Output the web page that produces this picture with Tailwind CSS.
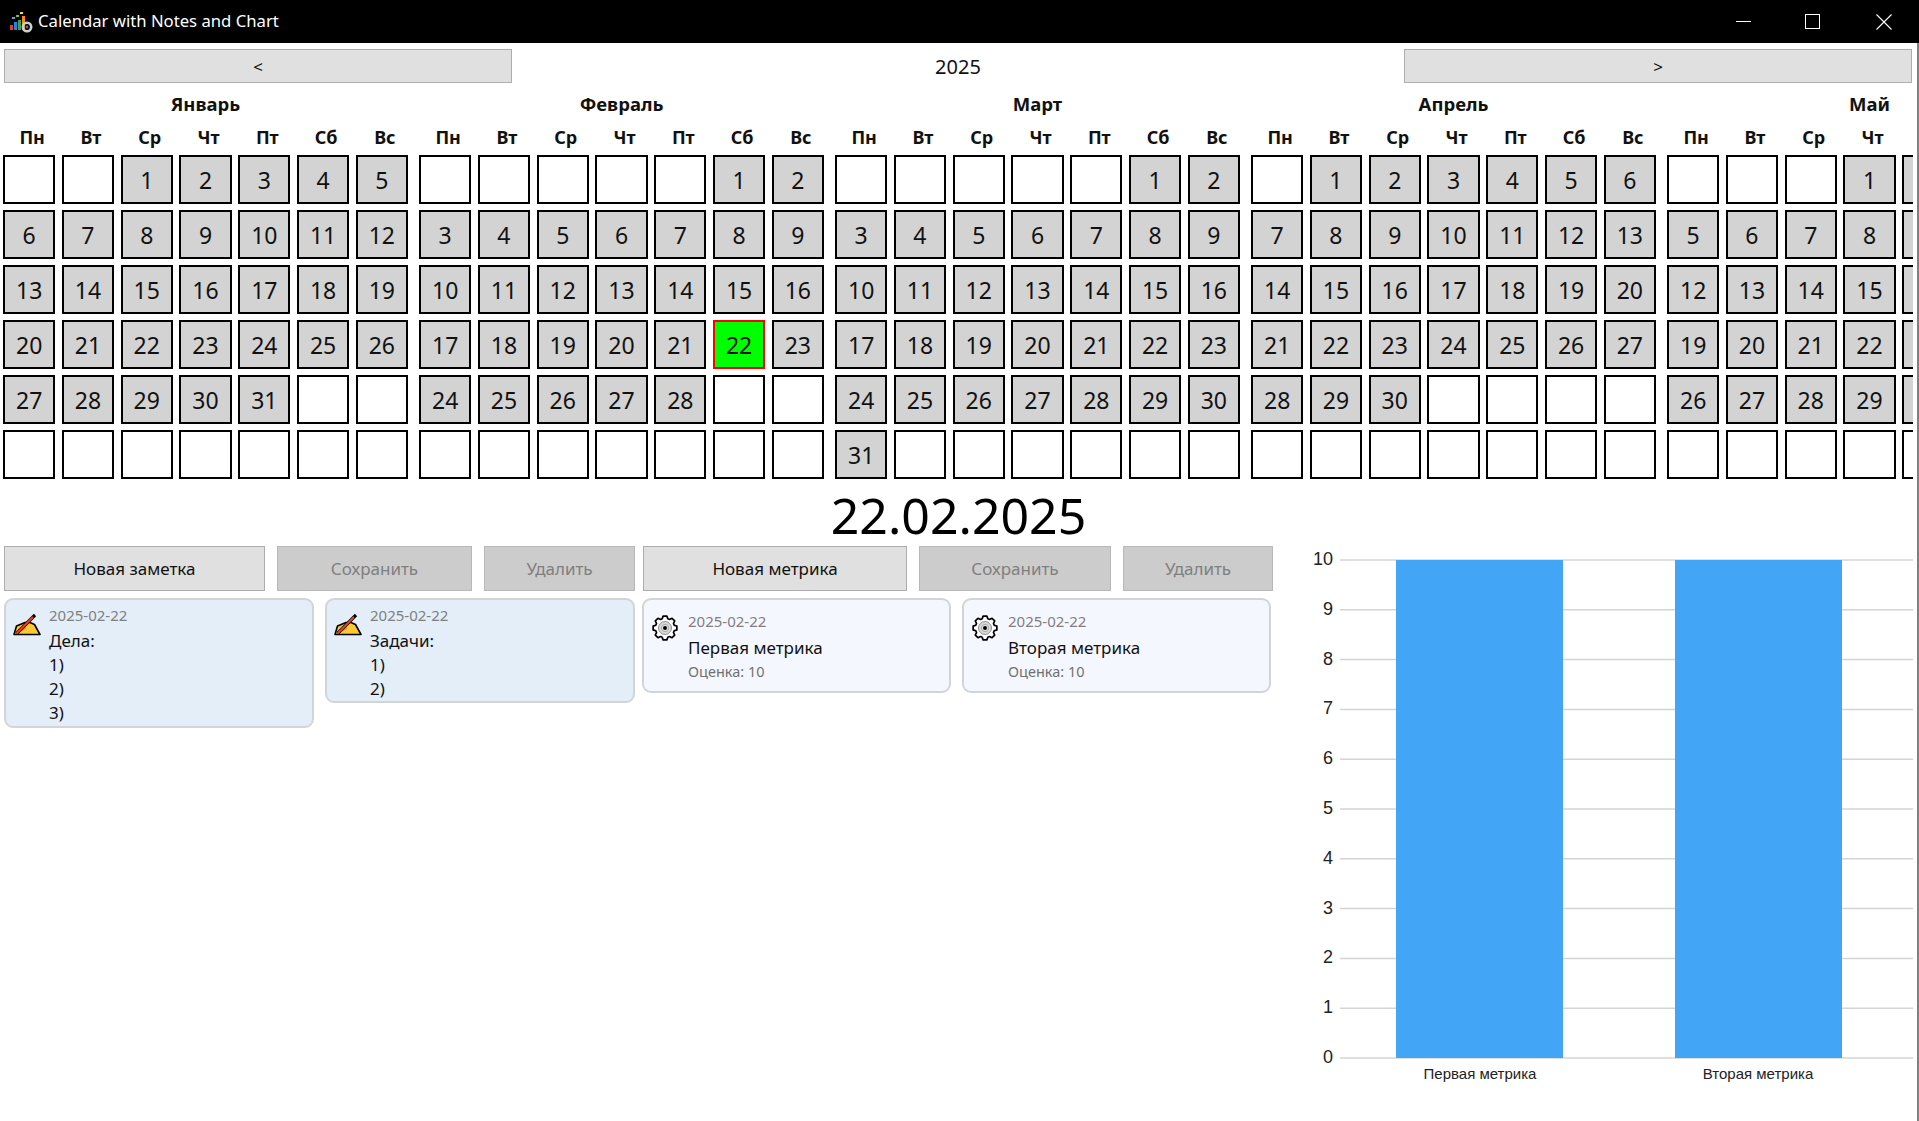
<!DOCTYPE html>
<html lang="ru">

<head>
  <meta charset="UTF-8">
  <meta name="viewport" content="width=device-width, initial-scale=1.0">
  <title>Calendar with Notes and Chart</title>
  <script src="https://cdn.jsdelivr.net/npm/@tailwindcss/browser@4"></script>
</head>

<body class="relative w-[1919px] h-[1121px] overflow-hidden bg-white font-['Noto_Sans','Open_Sans',sans-serif] text-[#111]">
  <!-- Title bar -->
  <header class="h-[43px] bg-black text-white flex items-center">
    <svg class="ml-[9px] w-[24px] h-[24px]" viewBox="0 0 24 24">
      <rect x="1" y="15" width="3" height="5" fill="#e53935" />
      <rect x="5" y="12" width="3" height="8" fill="#1e88e5" />
      <rect x="9" y="10" width="3" height="10" fill="#43a047" />
      <rect x="13" y="6" width="3" height="14" fill="#fb8c00" />
      <rect x="3" y="7" width="3" height="2" fill="#4fa3e0" />
      <rect x="7" y="5" width="3" height="2" fill="#66bb6a" />
      <rect x="11" y="2" width="3" height="2" fill="#fdd835" />
      <circle cx="18" cy="17" r="4.2" fill="none" stroke="#c9ced6" stroke-width="2.6" />
      <circle cx="18" cy="17" r="1.4" fill="#5d6b7a" />
    </svg>
    <span class="ml-[5px] text-[16.7px] leading-none">Calendar with Notes and Chart</span>
    <div class="ml-auto flex items-center">
      <div class="w-[15px] h-px bg-white mr-[54px]"></div>
      <div class="w-[15px] h-[15px] border border-white mr-[56px]"></div>
      <svg class="w-[16px] h-[16px] mr-[27px]" viewBox="0 0 16 16" stroke="white" stroke-width="1.1">
        <path d="M0.5 0.5 15.5 15.5M15.5 0.5 0.5 15.5" />
      </svg>
    </div>
  </header>

  <!-- Year navigation -->
  <nav class="flex items-center pt-[6px] pl-[4px] pr-[7px] h-[40px]">
    <button class="w-[508px] h-[34px] bg-[#e0e0e0] border border-[#adadad] text-[17px] leading-none">&lt;</button>
    <div class="flex-1 text-center text-[20px] leading-none pt-[2px]">2025</div>
    <button class="w-[508px] h-[34px] bg-[#e0e0e0] border border-[#adadad] text-[17px] leading-none">&gt;</button>
  </nav>

  <!-- Months -->
  <section id="months" class="flex gap-x-[11px] pl-[3px] overflow-hidden w-[1913px]"></section>

  <!-- Selected date -->
  <div class="h-[67px] flex items-center justify-center pt-[5px] pr-[2px] text-[50px] leading-none text-black">22.02.2025</div>

  <!-- Notes, metrics, chart -->
  <main class="flex items-start pl-[4px]">
    <div class="w-[638px] shrink-0">
      <div class="flex h-[45px] text-[17px]">
        <button class="w-[261px] bg-[#e0e0e0] border border-[#adadad]">Новая заметка</button>
        <button class="ml-[12px] w-[195px] bg-[#cccccc] border border-[#b8b8b8] text-[#808080]">Сохранить</button>
        <button class="ml-[12px] w-[151px] bg-[#cccccc] border border-[#b8b8b8] text-[#808080]">Удалить</button>
      </div>
      <div class="flex items-start mt-[7px] gap-x-[11px]">
        <article class="w-[310px] h-[130px] flex rounded-[9px] border-2 border-[#d2d5d8] bg-[#e3eef9]">
          <svg class="ml-[7px] mt-[13px] w-[28px] h-[23px] shrink-0" viewBox="0 0 28 23">
            <path d="M1 21.5 3.5 13 12 9.5 17 9.5 21.5 11.5 27 21.5Z" fill="#fdc835" stroke="#000" stroke-width="1.6" stroke-linejoin="round" />
            <path d="M7 15 12 12 13.5 16 9 18.5Z" fill="#e0a52a" />
            <path d="M3.5 20.5 22 2" stroke="#000" stroke-width="3.2" />
            <path d="M3.5 20.5 20 4" stroke="#f0441f" stroke-width="1.8" />
          </svg>
          <div class="ml-[8px] pt-[2px] text-[17px] leading-[24px]">
            <p class="text-[15px] leading-[27px] text-[#808080]">2025-02-22</p>
            <p>Дела:</p>
            <p>1)</p>
            <p>2)</p>
            <p>3)</p>
          </div>
        </article>
        <article class="w-[310px] h-[105px] flex rounded-[9px] border-2 border-[#d2d5d8] bg-[#e3eef9]">
          <svg class="ml-[7px] mt-[13px] w-[28px] h-[23px] shrink-0" viewBox="0 0 28 23">
            <path d="M1 21.5 3.5 13 12 9.5 17 9.5 21.5 11.5 27 21.5Z" fill="#fdc835" stroke="#000" stroke-width="1.6" stroke-linejoin="round" />
            <path d="M7 15 12 12 13.5 16 9 18.5Z" fill="#e0a52a" />
            <path d="M3.5 20.5 22 2" stroke="#000" stroke-width="3.2" />
            <path d="M3.5 20.5 20 4" stroke="#f0441f" stroke-width="1.8" />
          </svg>
          <div class="ml-[8px] pt-[2px] text-[17px] leading-[24px]">
            <p class="text-[15px] leading-[27px] text-[#808080]">2025-02-22</p>
            <p>Задачи:</p>
            <p>1)</p>
            <p>2)</p>
          </div>
        </article>
      </div>
    </div>

    <div class="w-[631px] shrink-0">
      <div class="flex h-[45px] ml-px text-[17px]">
        <button class="w-[264px] bg-[#e0e0e0] border border-[#adadad]">Новая метрика</button>
        <button class="ml-[12px] w-[192px] bg-[#cccccc] border border-[#b8b8b8] text-[#808080]">Сохранить</button>
        <button class="ml-[12px] w-[150px] bg-[#cccccc] border border-[#b8b8b8] text-[#808080]">Удалить</button>
      </div>
      <div class="flex items-start mt-[7px] gap-x-[11px]">
        <article class="w-[309px] h-[95px] flex rounded-[9px] border-2 border-[#d2d5d8] bg-[#f5f7ff]">
          <svg class="ml-[8px] mt-[15px] w-[26px] h-[26px] shrink-0" viewBox="0 0 26 26">
            <path class="gear-outline" fill="#fff" stroke="#000" stroke-width="1.7" stroke-linejoin="round" />
            <circle cx="13" cy="13" r="6.5" fill="#d8d8d8" stroke="#8f8f8f" />
            <circle cx="13" cy="13" r="3.6" fill="#e8e8e8" stroke="#a8a8a8" />
            <circle cx="13" cy="13" r="2" fill="#000" />
          </svg>
          <div class="ml-[10px] pt-[8px]">
            <p class="text-[15px] leading-[26px] text-[#808080]">2025-02-22</p>
            <p class="text-[17px] leading-[27px]">Первая метрика</p>
            <p class="text-[14.5px] leading-[20px] text-[#707070]">Оценка: 10</p>
          </div>
        </article>
        <article class="w-[309px] h-[95px] flex rounded-[9px] border-2 border-[#d2d5d8] bg-[#f5f7ff]">
          <svg class="ml-[8px] mt-[15px] w-[26px] h-[26px] shrink-0" viewBox="0 0 26 26">
            <path class="gear-outline" fill="#fff" stroke="#000" stroke-width="1.7" stroke-linejoin="round" />
            <circle cx="13" cy="13" r="6.5" fill="#d8d8d8" stroke="#8f8f8f" />
            <circle cx="13" cy="13" r="3.6" fill="#e8e8e8" stroke="#a8a8a8" />
            <circle cx="13" cy="13" r="2" fill="#000" />
          </svg>
          <div class="ml-[10px] pt-[8px]">
            <p class="text-[15px] leading-[26px] text-[#808080]">2025-02-22</p>
            <p class="text-[17px] leading-[27px]">Вторая метрика</p>
            <p class="text-[14.5px] leading-[20px] text-[#707070]">Оценка: 10</p>
          </div>
        </article>
      </div>
    </div>

    <!-- Chart -->
    <svg id="chart" class="w-[646px] h-[560px] shrink-0 font-['Liberation_Sans',sans-serif]" viewBox="1273 546 646 560"></svg>
  </main>

  <!-- Window edge -->
  <div class="absolute right-0 top-[43px] bottom-0 w-[2px] bg-[#808080]"></div>

  <script>
    const months = [
      { name: 'Январь', offset: 2, days: 31 },
      { name: 'Февраль', offset: 5, days: 28 },
      { name: 'Март', offset: 5, days: 31 },
      { name: 'Апрель', offset: 1, days: 30 },
      { name: 'Май', offset: 3, days: 31 }
    ];
    const weekdays = ['Пн', 'Вт', 'Ср', 'Чт', 'Пт', 'Сб', 'Вс'];

    // Build one month block, always 6 rows of 7 cells
    function renderMonth(month, monthIndex)
    {
      // May runs off the window after its fourth column, nothing past that can be read
      const visibleCols = monthIndex === 4 ? 4 : 7;
      const cells = [];
      for (let i = 0; i < 42; i++)
      {
        const day = i - month.offset + 1;
        const label = i % 7 < visibleCols ? day : '';
        if (day < 1 || day > month.days)
        {
          cells.push('<div class="h-[49px] border-2 border-black bg-white"></div>');
        } else if (monthIndex === 1 && day === 22)
        {
          cells.push(`<div class="h-[49px] pt-px border-2 border-[#ff0000] bg-[#00ff00] flex items-center justify-center text-[23px]">${label}</div>`);
        } else
        {
          cells.push(`<div class="h-[49px] pt-px border-2 border-black bg-[#d3d3d3] flex items-center justify-center text-[23px]">${label}</div>`);
        }
      }
      return `
        <div class="w-[405px] shrink-0">
          <div class="h-[26px] mt-[8px] flex items-center justify-center text-[18.5px] font-bold leading-none">${month.name}</div>
          <div class="grid grid-cols-7 gap-x-[6.5px] h-[38px] pt-[2px] items-center text-[18px] font-bold leading-none">
            ${weekdays.map((d, i) => `<div class="text-center pl-[6px]">${i < visibleCols ? d : ''}</div>`).join('')}
          </div>
          <div class="grid grid-cols-7 gap-x-[6.5px] gap-y-[6px]">${cells.join('')}</div>
        </div>`;
    }
    document.getElementById('months').innerHTML = months.map(renderMonth).join('');

    // Gear outline with 8 teeth around the centre of a 26x26 box
    function gearPath()
    {
      const pts = [];
      const at = (deg, r) => {
        const a = deg * Math.PI / 180;
        return (13 + r * Math.cos(a)).toFixed(2) + ' ' + (13 + r * Math.sin(a)).toFixed(2);
      };
      for (let t = 0; t < 8; t++)
      {
        const c = t * 45;
        pts.push(at(c - 17, 9.6), at(c - 9, 12), at(c + 9, 12), at(c + 17, 9.6));
      }
      return 'M' + pts.join(' L') + 'Z';
    }
    document.querySelectorAll('.gear-outline').forEach(p => p.setAttribute('d', gearPath()));

    // Bar chart: value axis 0..10, lines from y=1058 up to y=560
    function renderChart()
    {
      let out = '';
      for (let v = 0; v <= 10; v++)
      {
        const y = 1058 - v * 49.8;
        out += `<line x1="1340" x2="1913" y1="${y}" y2="${y}" stroke="#d4d4d4" stroke-width="1.5" />`;
        out += `<text x="1333" y="${y + 5}" text-anchor="end" font-size="18" fill="#222">${v}</text>`;
      }
      out += '<rect x="1396" y="560" width="167" height="498" fill="#42a5f5" />';
      out += '<rect x="1675" y="560" width="167" height="498" fill="#42a5f5" />';
      out += '<text x="1480" y="1079" text-anchor="middle" font-size="15" fill="#222">Первая метрика</text>';
      out += '<text x="1758" y="1079" text-anchor="middle" font-size="15" fill="#222">Вторая метрика</text>';
      document.getElementById('chart').innerHTML = out;
    }
    renderChart();
  </script>
</body>

</html>
